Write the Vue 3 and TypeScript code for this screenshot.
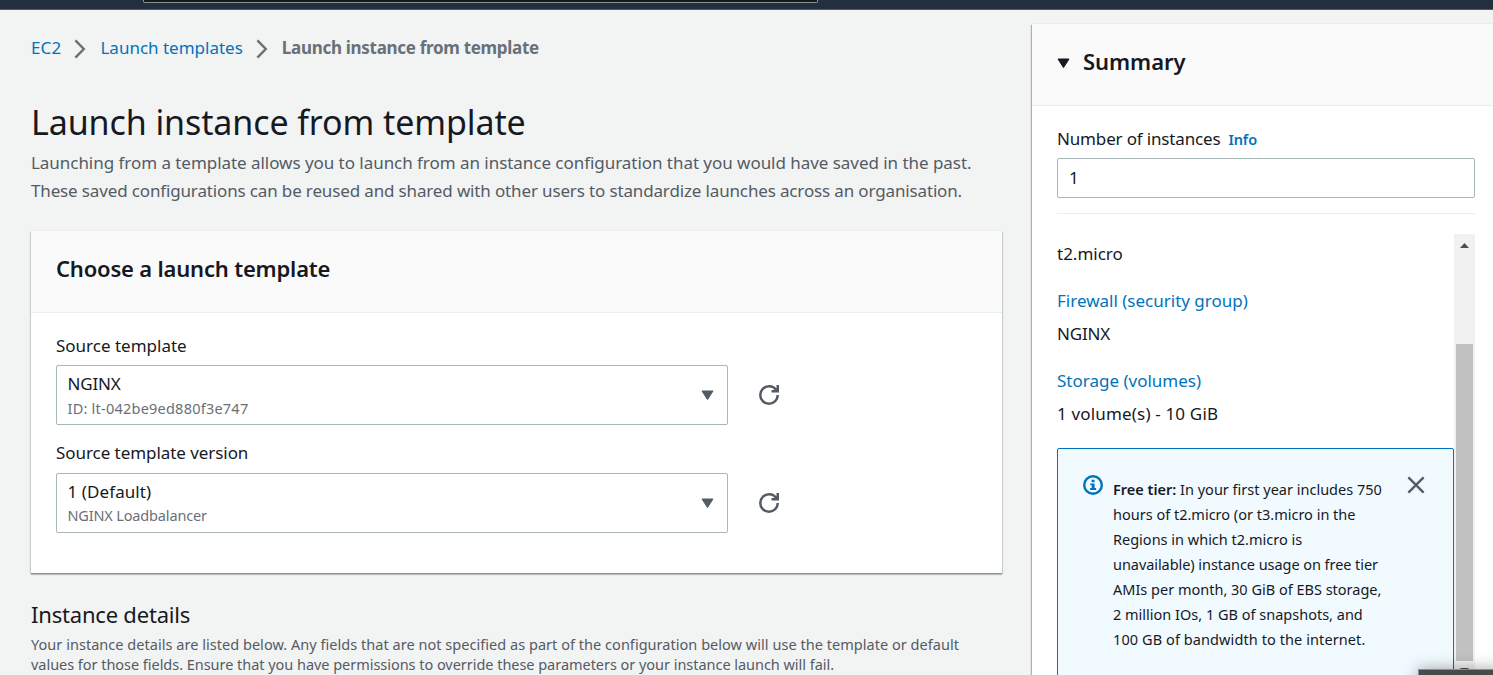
<script setup lang="ts">
interface Field {
  label: string
  labelClass: string
  value: string
  valueClass: string
  detail: string
  detailClass: string
}

const fields: Field[] = [
  {
    label: 'Source template',
    labelClass: '',
    value: 'NGINX',
    valueClass: 'track-n2',
    detail: 'ID: lt-042be9ed880f3e747',
    detailClass: 'track-3',
  },
  {
    label: 'Source template version',
    labelClass: 'track-n1',
    value: '1 (Default)',
    valueClass: 'track-1',
    detail: 'NGINX Loadbalancer',
    detailClass: 'track-n2',
  },
]
</script>

<template>
  <div class="page">
    <header class="topbar"><div class="search"></div></header>
    <div class="columns">
      <main class="main">
        <nav class="crumbs">
          <a class="track-2">EC2</a>
          <svg class="sep" width="12" height="20" viewBox="0 0 12 20"><path d="M1.4 1.4 9.8 10 1.4 18.6" /></svg>
          <a>Launch templates</a>
          <svg class="sep sep2" width="12" height="20" viewBox="0 0 12 20"><path d="M1.4 1.4 9.8 10 1.4 18.6" /></svg>
          <b>Launch instance from template</b>
        </nav>
        <h1>Launch instance from template</h1>
        <p class="lead">
          <span class="line track-lead">Launching from a template allows you to launch from an instance configuration that you would have saved in the past.</span>
          <span class="line track-leadn">These saved configurations can be reused and shared with other users to standardize launches across an organisation.</span>
        </p>

        <section class="card">
          <h2>Choose a launch template</h2>
          <div class="card-body">
            <div v-for="field in fields" :key="field.label" class="field">
              <label><span :class="field.labelClass">{{ field.label }}</span></label>
              <div class="row">
                <div class="select">
                  <div>
                    <div class="value" :class="field.valueClass">{{ field.value }}</div>
                    <div class="detail" :class="field.detailClass">{{ field.detail }}</div>
                  </div>
                  <svg class="caret" width="13" height="11" viewBox="0 0 13 11"><path d="M1 1h11L6.5 9.6z" /></svg>
                </div>
                <svg class="refresh" width="20" height="20" viewBox="0 0 16 16">
                  <path d="M15 8c0 3.87-3.13 7-7 7s-7-3.13-7-7 3.13-7 7-7c2.79 0 5.2 1.63 6.32 4" />
                  <path d="M10 5h5V0" />
                  <path class="tip" d="M11.6 5H15V1.6z" />
                </svg>
              </div>
            </div>
          </div>
        </section>

        <h3>Instance details</h3>
        <p class="sub">
          <span class="line track-sub">Your instance details are listed below. Any fields that are not specified as part of the configuration below will use the template or default</span>
          <span class="line track-subn">values for those fields. Ensure that you have permissions to override these parameters or your instance launch will fail.</span>
        </p>
      </main>

      <aside class="summary">
        <h2 class="summary-head">
          <svg class="caret dark" width="13" height="11" viewBox="0 0 13 11"><path d="M1 1h11L6.5 9.6z" /></svg>
          Summary
        </h2>
        <div class="summary-body">
          <div class="count-label"><span class="track-n2">Number of instances</span><a>Info</a></div>
          <div class="input">1</div>
          <hr />
          <div class="scroll">
            <div class="content">
              <div class="item first">t2.micro</div>
              <a class="item link">Firewall (security group)</a>
              <div class="item track-n2">NGINX</div>
              <a class="item link">Storage (volumes)</a>
              <div class="item track-2">1 volume(s) - 10 GiB</div>
              <div class="alert">
                <svg class="info" width="20" height="20" viewBox="0 0 20 20">
                  <circle cx="10" cy="10" r="8.8" />
                  <path d="M8.6 4.7h3v2.6h-3zM7.3 8.4h4.3v4.6h1.5v1.9H7.1V13h1.6v-2.7H7.3z" />
                </svg>
                <p>
                  <span class="line"><b>Free tier:</b> In your first year includes 750</span>
                  <span class="line">hours of t2.micro (or t3.micro in the</span>
                  <span class="line">Regions in which t2.micro is</span>
                  <span class="line track-n1">unavailable) instance usage on free tier</span>
                  <span class="line">AMIs per month, 30 GiB of EBS storage,</span>
                  <span class="line">2 million IOs, 1 GB of snapshots, and</span>
                  <span class="line track-1">100 GB of bandwidth to the internet.</span>
                </p>
                <svg class="close" width="18" height="18" viewBox="0 0 18 18"><path d="M1.4 1.4 16.6 16.6M16.6 1.4 1.4 16.6" /></svg>
              </div>
            </div>
            <div class="bar">
              <svg width="21" height="21" viewBox="0 0 21 21"><path d="M6 14h9l-4.5-5z" /></svg>
              <div class="thumb"></div>
              <svg width="21" height="21" viewBox="0 0 21 21"><path d="M6 7h9l-4.5 5z" /></svg>
            </div>
          </div>
        </div>
      </aside>
    </div>
    <div class="overlay"></div>
  </div>
</template>

<style>
body {
  margin: 0;
  overflow: hidden;
}
</style>

<style scoped>
* {
  box-sizing: border-box;
}
.page {
  position: relative;
  width: 1493px;
  height: 675px;
  overflow: hidden;
  background: #f2f3f3;
  color: #16191f;
  font: 400 17px/28px "Noto Sans", "Open Sans", sans-serif;
  white-space: nowrap;
}
h1, h2, h3, p {
  margin: 0;
}
b {
  font-weight: 600;
}
a {
  color: #0073bb;
}
.line {
  display: block;
}
.topbar {
  height: 10px;
  background: #232f3e;
  border-bottom: 1px solid #545b64;
}
.search {
  width: 675px;
  height: 3px;
  margin-left: 143px;
  background: #16191f;
  border: 1px solid #879596;
  border-top: 0;
  border-radius: 0 0 2px 2px;
}
.columns {
  display: flex;
  height: 665px;
}
.main {
  width: 971px;
  margin-left: 31px;
  padding-top: 24px;
}
.crumbs {
  display: flex;
  align-items: center;
  height: 28px;
}
.crumbs b {
  color: #687078;
  font-weight: 700;
  letter-spacing: -0.3px;
}
.sep {
  margin: 2px 14px 0 13px;
  fill: none;
  stroke: #687078;
  stroke-width: 2.4;
}
h1 {
  margin-top: 37px;
  font-size: 34px;
  font-weight: 400;
  line-height: 46px;
  letter-spacing: -0.1px;
}
.lead {
  margin-top: 4px;
  color: #545b64;
}
.card {
  height: 342px;
  margin-top: 26px;
  background: #fff;
  box-shadow: 0 1px 0 0 #879596, 0 2px 1px 0 rgba(0, 28, 36, 0.2), 1px 1px 1px 0 rgba(0, 28, 36, 0.15), -1px 1px 1px 0 rgba(0, 28, 36, 0.15), 0 -1px 0 0 #eaeded;
}
h2 {
  height: 82px;
  padding: 23px 25px 0;
  background: #fafafa;
  border-bottom: 1px solid #eaeded;
  font-size: 22px;
  font-weight: 600;
  letter-spacing: -0.19px;
}
.card-body {
  padding: 19px 25px 0;
}
.field {
  margin-bottom: 14px;
}
label {
  display: block;
  height: 33px;
}
.field + .field label {
  height: 34px;
}
.row {
  display: flex;
  align-items: center;
}
.select {
  display: flex;
  justify-content: space-between;
  width: 672px;
  height: 60px;
  padding: 6px 13.5px 0 10.5px;
  border: 1px solid #aab7b8;
  border-radius: 2px;
}
.value {
  height: 24px;
  line-height: 24px;
}
.detail {
  height: 25px;
  color: #687078;
  font-size: 14.5px;
  line-height: 25px;
}
.field + .field .detail {
  line-height: 23px;
}
.caret {
  margin-top: 18px;
  fill: #545b64;
  stroke: #545b64;
  stroke-width: 1;
  stroke-linejoin: round;
}
.refresh {
  margin-left: 31px;
  fill: none;
  stroke: #545b64;
  stroke-width: 2;
}
.refresh .tip {
  fill: #545b64;
  stroke: none;
}
h3 {
  margin-top: 26px;
  font-size: 22px;
  font-weight: 400;
  line-height: 30px;
  letter-spacing: -0.2px;
}
.sub {
  margin-top: 5px;
  color: #545b64;
  font-size: 14.5px;
  line-height: 20px;
}
.summary {
  width: 461px;
  margin: 14px 0 0 30px;
  background: #fff;
  box-shadow: -1px 1px 1px 0 rgba(0, 28, 36, 0.3), 0 -1px 0 0 #eaeded;
}
.summary-head {
  display: flex;
  letter-spacing: -0.05px;
}
.caret.dark {
  margin: 11px 13.5px 0 -0.5px;
  fill: #16191f;
  stroke: #16191f;
}
.summary-body {
  padding: 19px 18px 0 25px;
}
.count-label {
  height: 33px;
}
.count-label a {
  margin-left: 8px;
  font-size: 14.5px;
  font-weight: 600;
  letter-spacing: -0.1px;
}
.input {
  height: 40px;
  padding: 5px 11px;
  border: 1px solid #aab7b8;
  border-radius: 2px;
}
hr {
  height: 1px;
  margin: 15px 0 20px;
  background: #eaeded;
  border: 0;
}
.scroll {
  display: flex;
  height: 450px;
}
.content {
  width: 397px;
  padding-top: 6px;
}
.item {
  display: block;
  height: 33px;
}
.first,
.link + .item {
  height: 47px;
}
.alert {
  display: flex;
  height: 250px;
  margin-top: 1px;
  padding: 26px 28px 0 25px;
  background: #f1faff;
  border: 1px solid #0073bb;
  border-radius: 2px;
}
.alert p {
  flex: 1;
  margin: 2px 0 0 10px;
  font-size: 14.5px;
  line-height: 25px;
}
.info circle {
  fill: none;
  stroke: #0073bb;
  stroke-width: 2.4;
}
.info path {
  fill: #0073bb;
}
.close {
  margin-top: 1px;
  stroke: #545b64;
  stroke-width: 2.4;
}
.bar {
  width: 21px;
  height: 448px;
  background: #f1f1f1;
}
.bar svg {
  display: block;
  fill: #505050;
}
.thumb {
  height: 317px;
  margin: 89px 2px 0;
  background: #c1c1c1;
}
.overlay {
  position: absolute;
  left: 1418px;
  top: 669px;
  width: 90px;
  height: 30px;
  background: #4a4a4a;
  border: 1px solid #8c8f90;
  box-shadow: 0 0 16px rgba(0, 0, 0, 0.35);
}
.track-1 { letter-spacing: 0.09px; }
.track-2 { letter-spacing: 0.17px; }
.track-3 { letter-spacing: 0.23px; }
.track-n1 { letter-spacing: -0.06px; }
.track-n2 { letter-spacing: -0.16px; }
.track-lead { letter-spacing: -0.042px; }
.track-leadn { letter-spacing: -0.145px; }
.track-sub { letter-spacing: 0.034px; }
.track-subn { letter-spacing: -0.036px; }
</style>
